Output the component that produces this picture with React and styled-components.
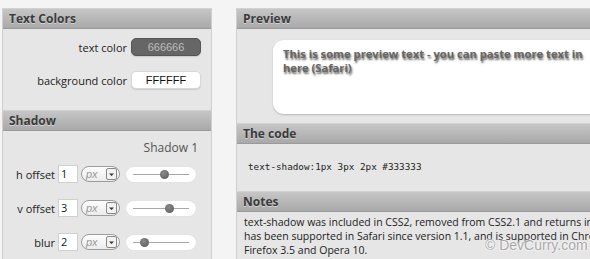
import styled, { createGlobalStyle } from "styled-components";

const Global = createGlobalStyle`
  html, body {
    margin: 0;
    padding: 0;
    background: #f4f4f4;
    overflow: hidden;
  }
  body {
    font-family: "Open Sans", "DejaVu Sans", sans-serif;
    color: #222;
  }
`;

const Page = styled.div`
  position: relative;
  display: flex;
  align-items: flex-start;
  gap: 24px;
  padding: 8px 0 0 2px;
  width: 590px;
  height: 259px;
  box-sizing: border-box;
  overflow: hidden;
`;

const Panel = styled.div`
  width: ${(p) => p.$width}px;
  flex: none;
  background: #e6e6e6;
  border-left: 1px solid #cfcfcf;
  border-right: 1px solid #cfcfcf;
  height: 260px;
`;

const Header = styled.div`
  height: 19px;
  line-height: 19px;
  padding-left: 6px;
  background: linear-gradient(#c6c6c6, #a9a9a9);
  border-top: 1px solid #d2d2d2;
  border-bottom: 1px solid #9a9a9a;
  font-size: 12px;
  font-weight: 700;
  color: #3b3b3b;
  text-shadow: 0 1px 0 rgba(255, 255, 255, 0.45);
`;

const Body = styled.div`
  height: ${(p) => p.$height}px;
  box-sizing: border-box;
  padding: ${(p) => p.$pad || "0"};
`;

const ColorRow = styled.div`
  display: flex;
  align-items: center;
  justify-content: flex-end;
  gap: 4px;
  padding-right: 10px;
  height: 18px;
  margin-bottom: 15px;
  font-size: 11px;
  color: #222;
`;

const Swatch = styled.div`
  width: 70px;
  height: 18px;
  box-sizing: border-box;
  border-radius: 5px;
  background: ${(p) => p.$bg};
  color: ${(p) => p.$fg};
  border: 1px solid ${(p) => (p.$bg === "#fff" ? "#d8d8d8" : "#555")};
  box-shadow: 0 1px 1px rgba(0, 0, 0, 0.12);
  display: flex;
  align-items: center;
  justify-content: center;
  font-family: "Liberation Sans", Arial, sans-serif;
  font-size: 11px;
`;

const ShadowTitle = styled.div`
  text-align: right;
  padding-right: 13px;
  font-size: 12px;
  color: #555;
  height: 18px;
  line-height: 18px;
  margin-bottom: 8px;
`;

const OffsetRow = styled.div`
  display: flex;
  align-items: center;
  height: 18px;
  margin-bottom: 16px;
  font-size: 11px;
`;

const Label = styled.span`
  width: 44px;
  margin-left: 8px;
  text-align: right;
  color: #222;
`;

const NumBox = styled.div`
  margin-left: 3px;
  width: 20px;
  height: 18px;
  box-sizing: border-box;
  background: #fff;
  border: 1px solid #cfcfcf;
  padding-left: 2px;
  line-height: 16px;
  font-size: 11px;
  color: #123;
`;

const Select = styled.div`
  margin-left: 3px;
  width: 39px;
  height: 16px;
  box-sizing: border-box;
  border: 1px solid #9c9c9c;
  border-radius: 8px;
  background: linear-gradient(#fdfdfd, #ececec);
  display: flex;
  align-items: center;
  overflow: hidden;
`;

const SelectText = styled.span`
  flex: 1;
  padding-left: 4px;
  font-family: "Liberation Sans", Arial, sans-serif;
  font-style: italic;
  font-size: 11px;
  color: #999;
`;

const SelectBtn = styled.span`
  width: 11px;
  height: 12px;
  margin-right: 2px;
  box-sizing: border-box;
  border: 1px solid #888;
  border-radius: 2px;
  background: #f2f2f2;
  display: flex;
  align-items: center;
  justify-content: center;
`;

const Slider = styled.div`
  position: relative;
  margin-left: 6px;
  width: 70px;
  height: 15px;
  border-radius: 8px;
  background: #fff;
  box-shadow: 0 0 1px rgba(0, 0, 0, 0.1);
`;

const Track = styled.div`
  position: absolute;
  left: 7px;
  right: 7px;
  top: 7px;
  height: 1px;
  background: #a8a8a8;
`;

const Knob = styled.div`
  position: absolute;
  top: 3px;
  width: 9px;
  height: 9px;
  border-radius: 50%;
  background: radial-gradient(circle at 40% 35%, #8a8a8a, #555);
`;

const PreviewBox = styled.div`
  margin: 10px 0 0 36px;
  height: 74px;
  width: 330px;
  box-sizing: border-box;
  background: #fff;
  border-radius: 11px;
  box-shadow: 0 1px 2px rgba(0, 0, 0, 0.2);
  padding: 7px 10px;
  font-size: 11.2px;
  font-weight: 700;
  line-height: 14px;
  color: #666;
  text-shadow: 1px 2px 2px rgba(51, 51, 51, 0.8);
`;

const Code = styled.div`
  font-family: "DejaVu Sans Mono", monospace;
  font-size: 9.3px;
  color: #222;
  padding: 17px 0 0 11px;
`;

const Notes = styled.div`
  padding: 3px 0 0 7px;
  width: 400px;
  font-size: 10.5px;
  line-height: 14px;
  color: #222;
  white-space: nowrap;
`;

const Watermark = styled.div`
  position: absolute;
  left: 485px;
  top: 237px;
  font-family: "Liberation Sans", Arial, sans-serif;
  font-size: 14px;
  color: #a9a9a9;
  text-shadow: 0 0 2px #fff, 0 0 3px #fff;
`;

function Arrow() {
  return (
    <svg width="7" height="5" viewBox="0 0 7 5">
      <path d="M1 1.5h5L3.5 4z" fill="#333" />
    </svg>
  );
}

const rows = [
  { label: "h offset", value: "1", knob: 34 },
  { label: "v offset", value: "3", knob: 39 },
  { label: "blur", value: "2", knob: 14 },
];

export default function App() {
  return (
    <>
      <Global />
      <Page>
        <Panel $width={208}>
          <Header>Text Colors</Header>
          <Body $height={81} $pad="9px 0 0 0">
            <ColorRow>
              text color
              <Swatch $bg="#666" $fg="#bdbdbd">666666</Swatch>
            </ColorRow>
            <ColorRow>
              background color
              <Swatch $bg="#fff" $fg="#111">FFFFFF</Swatch>
            </ColorRow>
          </Body>
          <Header>Shadow</Header>
          <Body $height={140} $pad="8px 0 0 0">
            <ShadowTitle>Shadow 1</ShadowTitle>
            {rows.map((r) => (
              <OffsetRow key={r.label}>
                <Label>{r.label}</Label>
                <NumBox>{r.value}</NumBox>
                <Select>
                  <SelectText>px</SelectText>
                  <SelectBtn>
                    <Arrow />
                  </SelectBtn>
                </Select>
                <Slider>
                  <Track />
                  <Knob style={{ left: r.knob }} />
                </Slider>
              </OffsetRow>
            ))}
          </Body>
        </Panel>
        <Panel $width={420}>
          <Header>Preview</Header>
          <Body $height={94} $pad="1px 0 0 0">
            <PreviewBox>
              This is some preview text - you can paste more text in here
              (Safari)
            </PreviewBox>
          </Body>
          <Header>The code</Header>
          <Body $height={47}>
            <Code>text-shadow:1px 3px 2px #333333</Code>
          </Body>
          <Header>Notes</Header>
          <Body $height={52}>
            <Notes>
              text-shadow was included in CSS2, removed from CSS2.1 and returns in CSS3. It
              <br />
              has been supported in Safari since version 1.1, and is supported in Chrome,
              <br />
              Firefox 3.5 and Opera 10.
            </Notes>
          </Body>
        </Panel>
        <Watermark>© DevCurry.com</Watermark>
      </Page>
    </>
  );
}
